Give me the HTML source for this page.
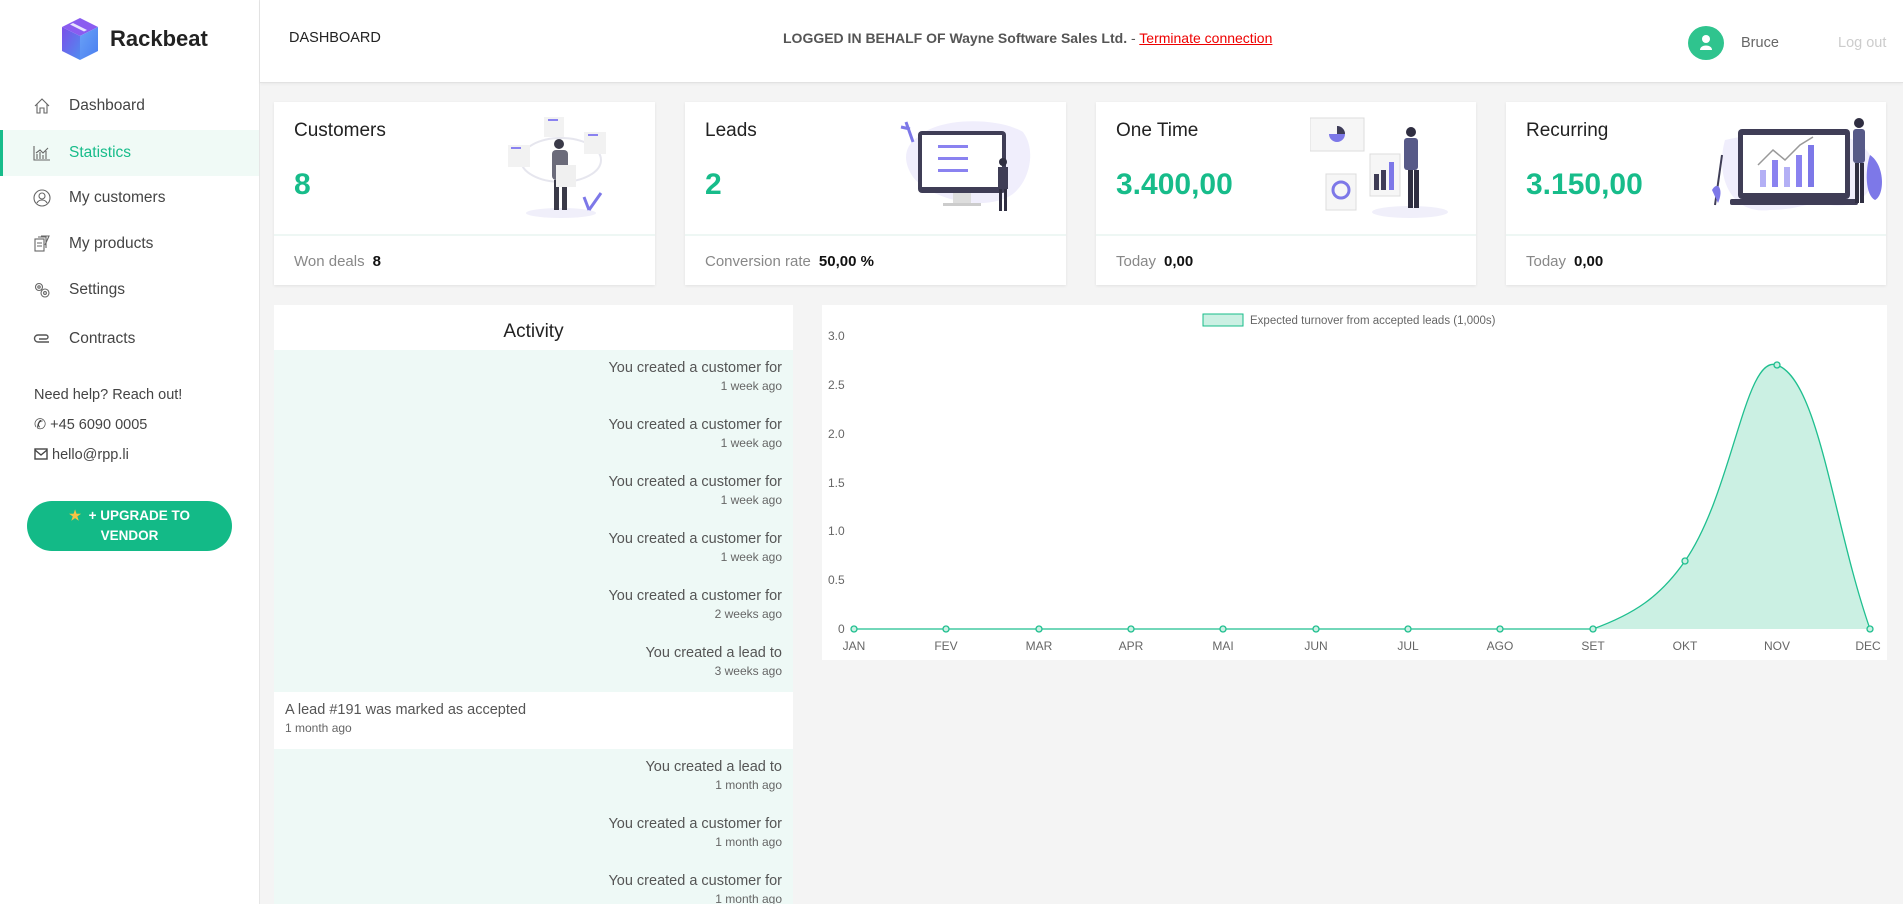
<!DOCTYPE html>
<html><head><meta charset="utf-8">
<style>
*{box-sizing:border-box;margin:0;padding:0}
html{width:1903px;height:904px;overflow:hidden}
body{width:1903px;height:904px;overflow:hidden;background:#f4f4f4;font-family:"Liberation Sans",sans-serif;color:#444;position:relative}
.abs{position:absolute}
#side{left:0;top:0;width:260px;height:904px;background:#fff;border-right:1px solid #e6e6e6}
#head{left:260px;top:0;width:1643px;height:83px;background:#fff;border-bottom:1px solid #e2e2e2;box-shadow:0 1px 3px rgba(0,0,0,.05)}
.nav{position:absolute;left:0;width:259px;height:46px;display:flex;align-items:center;font-size:15.5px;color:#444}
.nav svg{position:absolute;left:33px}
.nav span{position:absolute;left:69px;top:14px}
.nav.act{background:#f0faf6;border-left:3px solid #17bc8a;color:#17bc8a}
.card{position:absolute;top:102px;height:183px;background:#fff;box-shadow:0 1px 3px rgba(0,0,0,.08)}
.card .t{position:absolute;left:20px;top:18px;font-size:19px;color:#222}
.card .num{position:absolute;left:20px;top:66px;font-size:30px;font-weight:bold;color:#17bc8a}
.card .ft{position:absolute;left:0;right:0;top:132px;bottom:0;border-top:2px solid #eef7f4;font-size:15px;color:#888;padding:17px 20px}
.card .ft b{color:#111;margin-left:8px}
.card svg{position:absolute}
#act{left:274px;top:305px;width:519px;height:599px;background:#fff;overflow:hidden}
#act h3{font-weight:normal;font-size:19px;color:#222;text-align:center;height:45px;line-height:54px}
.it{height:57px;padding:9px 11px 0;background:#eef9f6;text-align:right}
.it .a{font-size:14.5px;line-height:19px;color:#555}
.it .b{font-size:12px;line-height:17px;color:#666}
.it.w{background:#fff;text-align:left}
#chart{left:822px;top:305px;width:1065px;height:355px;background:#fff}
</style></head><body>

<div id="side" class="abs">
  <svg class="abs" style="left:60px;top:16px" width="40" height="46" viewBox="0 0 40 46">
    <defs><linearGradient id="g1" x1="0" y1="0" x2="1" y2="1"><stop offset="0" stop-color="#7b4fe8"/><stop offset="1" stop-color="#4f8df0"/></linearGradient>
    <linearGradient id="g2" x1="0" y1="0" x2="1" y2="1"><stop offset="0" stop-color="#6aa2f7"/><stop offset="1" stop-color="#4a7ef0"/></linearGradient></defs>
    <path d="M20 2 L38 11 L20 20 L2 11Z" fill="#8a5cf0"/>
    <path d="M2 11 L20 20 L20 44 L2 35Z" fill="url(#g1)"/>
    <path d="M38 11 L20 20 L20 44 L38 35Z" fill="url(#g2)"/>
    <path d="M13 7 L27 14 L24 15.5 L10 8.5Z" fill="#e8e4ff"/>
  </svg>
  <div class="abs" style="left:110px;top:26px;font-size:22px;font-weight:bold;color:#222">Rackbeat</div>

  <div class="nav" style="top:83px"><svg width="18" height="18" viewBox="0 0 18 18" fill="none" stroke="#666" stroke-width="1.1"><path d="M2 9 L9 2 L16 9 M4 7 V16 H7 V11 H11 V16 H14 V7"/></svg><span>Dashboard</span></div>
  <div class="nav act" style="top:130px"><svg width="18" height="18" viewBox="0 0 18 18" fill="none" stroke="#666" stroke-width="1.1" style="left:30px"><path d="M1 2 V16 H17 M4 15 V10 M7 15 V8 M10 15 V11 M13 15 V7 M3 9 L7 6 L10 9 L15 4"/></svg><span style="left:66px">Statistics</span></div>
  <div class="nav" style="top:175px"><svg width="18" height="18" viewBox="0 0 18 18" fill="none" stroke="#666" stroke-width="1.1"><circle cx="9" cy="9" r="8"/><circle cx="9" cy="7" r="3"/><path d="M4 14 C6 10 12 10 14 14"/></svg><span>My customers</span></div>
  <div class="nav" style="top:221px"><svg width="18" height="18" viewBox="0 0 18 18" fill="none" stroke="#666" stroke-width="1.1"><rect x="2" y="4" width="9" height="12"/><path d="M5 2 H13 V13 M8 1 H16 L12 10 M4 8 H9 M4 11 H9"/></svg><span>My products</span></div>
  <div class="nav" style="top:267px"><svg width="18" height="18" viewBox="0 0 18 18" fill="none" stroke="#666" stroke-width="1.1"><circle cx="6" cy="6" r="3.5"/><circle cx="6" cy="6" r="1.2"/><circle cx="12" cy="12" r="4"/><circle cx="12" cy="12" r="1.4"/></svg><span>Settings</span></div>
  <div class="nav" style="top:316px"><svg width="18" height="18" viewBox="0 0 18 18" fill="none" stroke="#555" stroke-width="1.4"><path d="M16 12 H5 A3.5 3.5 0 0 1 5 5 H13 A2 2 0 0 1 13 9 H6"/></svg><span>Contracts</span></div>

  <div class="abs" style="left:34px;top:387px;font-size:14.5px;color:#444">Need help? Reach out!</div>
  <div class="abs" style="left:34px;top:417px;font-size:14.5px;color:#444">&#9990;&nbsp;+45 6090 0005</div>
  <div class="abs" style="left:34px;top:447px;font-size:14.5px;color:#444"><svg width="14" height="12" viewBox="0 0 14 12" style="vertical-align:-1px" fill="none" stroke="#444" stroke-width="1.4"><rect x="1" y="1" width="12" height="10"/><path d="M1 2 L7 7 L13 2"/></svg> hello@rpp.li</div>
  <div class="abs" style="left:27px;top:501px;width:205px;height:50px;border-radius:25px;background:#13ba87;color:#fff;font-weight:bold;font-size:13.5px;text-align:center;line-height:20px;padding-top:5px"><span style="color:#f6c344">&#9733;</span>&nbsp;&nbsp;+ UPGRADE TO<br>VENDOR</div>
</div>

<div id="head" class="abs">
  <div class="abs" style="left:29px;top:30px;font-size:14.5px;color:#222">DASHBOARD</div>
  <div class="abs" style="left:523px;top:30px;font-size:14px;color:#555"><b>LOGGED IN BEHALF OF Wayne Software Sales Ltd.</b> - <span style="color:#e00;text-decoration:underline">Terminate connection</span></div>
  <div class="abs" style="left:1428px;top:26px;width:36px;height:34px;border-radius:50%;background:#2fc48e">
    <svg width="36" height="34" viewBox="0 0 36 34"><circle cx="18" cy="13" r="4" fill="#fff"/><path d="M12 24 C12 18 24 18 24 24Z" fill="#fff"/></svg></div>
  <div class="abs" style="left:1481px;top:35px;font-size:14.5px;color:#666">Bruce</div>
  <div class="abs" style="left:1578px;top:35px;font-size:14.5px;color:#ccc">Log out</div>
</div>

<!-- cards -->
<div class="card" style="left:274px;width:381px">
  <div class="t">Customers</div><div class="num">8</div>
  <svg style="left:232px;top:13px" width="105" height="105" viewBox="0 0 105 105">
    <ellipse cx="55" cy="98" rx="35" ry="5" fill="#f0effa"/>
    <ellipse cx="55" cy="45" rx="40" ry="22" fill="none" stroke="#e6e6ee" stroke-width="2"/>
    <rect x="38" y="2" width="20" height="20" fill="#f2f2f2"/><rect x="78" y="17" width="22" height="22" fill="#f2f2f2"/><rect x="2" y="30" width="22" height="22" fill="#f2f2f2"/>
    <rect x="42" y="4" width="10" height="2" fill="#8a82f0"/><rect x="82" y="19" width="10" height="2" fill="#8a82f0"/><rect x="5" y="32" width="10" height="2" fill="#8a82f0"/>
    <circle cx="53" cy="29" r="5" fill="#3a3a48"/><rect x="46" y="35" width="16" height="30" rx="4" fill="#6b6b7a"/>
    <rect x="48" y="65" width="5" height="30" fill="#3a3a48"/><rect x="56" y="65" width="5" height="30" fill="#3a3a48"/>
    <rect x="50" y="50" width="20" height="22" fill="#f0f0f0"/>
    <path d="M83 95 L95 78 M83 95 L78 82" stroke="#7d78e8" stroke-width="3"/>
  </svg>
  <div class="ft">Won deals<b>8</b></div>
</div>
<div class="card" style="left:685px;width:381px">
  <div class="t">Leads</div><div class="num">2</div>
  <svg style="left:213px;top:15px" width="135" height="103" viewBox="0 0 135 103">
    <path d="M20 20 C40 0 100 0 125 15 C140 35 130 70 110 80 C80 95 30 80 15 60 C5 45 5 30 20 20Z" fill="#f0eefc"/>
    <rect x="20" y="14" width="88" height="62" rx="4" fill="#3f3d56"/><rect x="24" y="18" width="80" height="52" fill="#fff"/>
    <rect x="40" y="28" width="30" height="3" fill="#8a82f0"/><rect x="40" y="40" width="30" height="3" fill="#8a82f0"/><rect x="40" y="52" width="30" height="3" fill="#8a82f0"/>
    <rect x="55" y="76" width="18" height="10" fill="#ddd"/><rect x="45" y="86" width="38" height="3" fill="#ccc"/>
    <circle cx="105" cy="45" r="4" fill="#2f2e41"/><rect x="100" y="50" width="10" height="22" fill="#3f3d56"/><rect x="101" y="72" width="3" height="22" fill="#2f2e41"/><rect x="106" y="72" width="3" height="22" fill="#2f2e41"/>
    <path d="M8 5 L15 25 M3 10 L12 12" stroke="#7d78e8" stroke-width="3"/>
  </svg>
  <div class="ft">Conversion rate<b>50,00 %</b></div>
</div>
<div class="card" style="left:1096px;width:380px">
  <div class="t">One Time</div><div class="num">3.400,00</div>
  <svg style="left:214px;top:14px" width="140" height="102" viewBox="0 0 140 102">
    <rect x="0" y="2" width="54" height="33" fill="#f6f6f6" stroke="#ddd"/><path d="M27 10 A8 8 0 1 1 19 18 L27 18Z" fill="#7d78e8"/><path d="M27 10 A8 8 0 0 1 35 18 L27 18Z" fill="#3f3d56"/>
    <rect x="16" y="58" width="30" height="36" fill="#f6f6f6" stroke="#ddd"/><circle cx="31" cy="74" r="8" fill="none" stroke="#7d78e8" stroke-width="3"/>
    <rect x="60" y="38" width="30" height="42" fill="#f6f6f6" stroke="#ddd"/><rect x="64" y="58" width="5" height="16" fill="#3f3d56"/><rect x="71" y="54" width="5" height="20" fill="#3f3d56"/><rect x="79" y="46" width="5" height="28" fill="#7d78e8"/>
    <ellipse cx="100" cy="96" rx="38" ry="6" fill="#f0effa"/>
    <circle cx="101" cy="16" r="5" fill="#2f2e41"/><rect x="94" y="22" width="14" height="32" rx="3" fill="#575a88"/><rect x="98" y="54" width="5" height="38" fill="#2f2e41"/><rect x="104" y="54" width="5" height="38" fill="#2f2e41"/>
  </svg>
  <div class="ft">Today<b>0,00</b></div>
</div>
<div class="card" style="left:1506px;width:380px">
  <div class="t">Recurring</div><div class="num">3.150,00</div>
  <svg style="left:204px;top:13px" width="176" height="102" viewBox="0 0 176 102">
    <path d="M15 25 C60 15 140 5 160 40 C175 70 150 95 120 90 C100 85 90 95 60 95 C20 100 5 60 15 25Z" fill="#f0eefc"/>
    <rect x="28" y="14" width="112" height="70" rx="4" fill="#3f3d56"/><rect x="33" y="20" width="102" height="58" fill="#fff"/>
    <rect x="20" y="84" width="128" height="6" rx="2" fill="#3f3d56"/>
    <rect x="50" y="55" width="6" height="17" fill="#b3aff5"/><rect x="62" y="45" width="6" height="27" fill="#8a82f0"/><rect x="74" y="52" width="6" height="20" fill="#b3aff5"/><rect x="86" y="40" width="6" height="32" fill="#8a82f0"/><rect x="98" y="30" width="6" height="42" fill="#7d78e8"/>
    <path d="M48 50 L63 35 L75 45 L90 30 L103 22" fill="none" stroke="#999" stroke-width="1.5"/>
    <circle cx="149" cy="8" r="5" fill="#2f2e41"/><rect x="143" y="14" width="12" height="34" rx="3" fill="#575a88"/><rect x="145" y="48" width="4" height="40" fill="#2f2e41"/><rect x="150" y="48" width="4" height="40" fill="#2f2e41"/>
    <path d="M160 40 C175 50 175 80 165 85 C155 80 155 55 160 40Z" fill="#7d78e8"/>
    <path d="M5 90 L12 40" stroke="#3f3d56" stroke-width="2"/><path d="M2 75 C8 65 14 75 8 88Z" fill="#7d78e8"/>
  </svg>
  <div class="ft">Today<b>0,00</b></div>
</div>

<!-- activity -->
<div id="act" class="abs">
  <h3>Activity</h3>
  <div class="it"><div class="a">You created a customer for</div><div class="b">1 week ago</div></div>
  <div class="it"><div class="a">You created a customer for</div><div class="b">1 week ago</div></div>
  <div class="it"><div class="a">You created a customer for</div><div class="b">1 week ago</div></div>
  <div class="it"><div class="a">You created a customer for</div><div class="b">1 week ago</div></div>
  <div class="it"><div class="a">You created a customer for</div><div class="b">2 weeks ago</div></div>
  <div class="it"><div class="a">You created a lead to</div><div class="b">3 weeks ago</div></div>
  <div class="it w"><div class="a">A lead #191 was marked as accepted</div><div class="b">1 month ago</div></div>
  <div class="it"><div class="a">You created a lead to</div><div class="b">1 month ago</div></div>
  <div class="it"><div class="a">You created a customer for</div><div class="b">1 month ago</div></div>
  <div class="it"><div class="a">You created a customer for</div><div class="b">1 month ago</div></div>
</div>

<!-- chart -->
<div id="chart" class="abs"></div>
<svg class="abs" style="left:0;top:0" width="1903" height="904" font-family="Liberation Sans, sans-serif" font-size="12" fill="#666">
  <rect x="1203" y="314" width="40" height="12" fill="#cbf0e3" stroke="#17bc8a" stroke-width="1"/>
  <text x="1250" y="324" font-size="11.5">Expected turnover from accepted leads (1,000s)</text>
  <g text-anchor="start">
    <text x="828" y="340">3.0</text><text x="828" y="389">2.5</text><text x="828" y="438">2.0</text>
    <text x="828" y="487">1.5</text><text x="828" y="535">1.0</text><text x="828" y="584">0.5</text><text x="838" y="633">0</text>
  </g>
  <path d="M854 629 L1593 629 C1634 614 1660 597 1685 561 C1733 492 1745 353 1777 365 C1819 380 1833 523 1870 629 Z" fill="#cbf0e3"/>
  <path d="M854 629 L1593 629 C1634 614 1660 597 1685 561 C1733 492 1745 353 1777 365 C1819 380 1833 523 1870 629" fill="none" stroke="#1fbf8f" stroke-width="1.3"/>
  <g fill="#cbf0e3" stroke="#1fbf8f" stroke-width="1.3">
    <circle cx="854" cy="629" r="3"/><circle cx="946" cy="629" r="3"/><circle cx="1039" cy="629" r="3"/><circle cx="1131" cy="629" r="3"/>
    <circle cx="1223" cy="629" r="3"/><circle cx="1316" cy="629" r="3"/><circle cx="1408" cy="629" r="3"/><circle cx="1500" cy="629" r="3"/>
    <circle cx="1593" cy="629" r="3"/><circle cx="1685" cy="561" r="3"/><circle cx="1777" cy="365" r="3"/><circle cx="1870" cy="629" r="3"/>
  </g>
  <g text-anchor="middle">
    <text x="854" y="650">JAN</text><text x="946" y="650">FEV</text><text x="1039" y="650">MAR</text><text x="1131" y="650">APR</text>
    <text x="1223" y="650">MAI</text><text x="1316" y="650">JUN</text><text x="1408" y="650">JUL</text><text x="1500" y="650">AGO</text>
    <text x="1593" y="650">SET</text><text x="1685" y="650">OKT</text><text x="1777" y="650">NOV</text><text x="1868" y="650">DEC</text>
  </g>
</svg>
</body></html>
